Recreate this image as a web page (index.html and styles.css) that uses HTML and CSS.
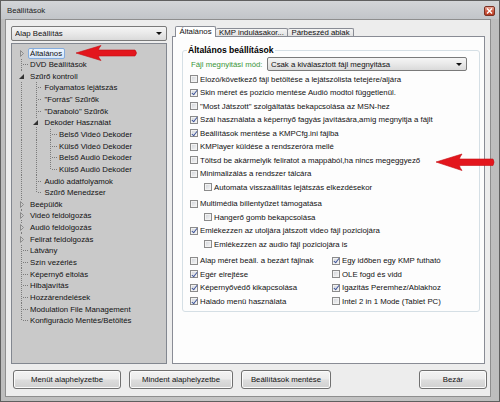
FILE: index.html
```html
<!DOCTYPE html>
<html lang="hu">
<head>
<meta charset="utf-8">
<title>Beállítások</title>
<link rel="stylesheet" href="styles.css">
</head>
<body>
<div class="window">
  <div class="titlebar">
    <span class="title">Beállítások</span>
    <span class="close"><svg width="7" height="6" viewBox="0 0 7 6"><path d="M1 0.5 L6 5.5 M6 0.5 L1 5.5" stroke="#fff" stroke-width="1.4"/></svg></span>
  </div>
  <div class="frame">
    <div class="client">
      <div class="left">
        <div class="combo"><span class="combo-text">Alap Beállítás</span><span class="caret"></span></div>
        <div class="tree">
          <div class="row"><span class="g f"><svg class="exp" width="7" height="9" viewBox="0 0 7 9"><rect width="7" height="9" fill="#c9c9c9"/><path d="M2.5 1.5 L5.5 4.5 L2.5 7.5 Z" fill="none" stroke="#8c8c8c"/></svg></span><span class="lbl sel">Általános</span></div>
          <div class="row"><span class="g t"></span><span class="lbl">DVD Beállítások</span></div>
          <div class="row"><span class="g v"><svg class="exp" width="7" height="9" viewBox="0 0 7 9"><rect width="7" height="9" fill="#c9c9c9"/><path d="M6 2 L6 7 L1 7 Z" fill="#333"/></svg></span><span class="lbl">Szűrő kontroll</span></div>
          <div class="row"><span class="g v"></span><span class="g t"></span><span class="lbl">Folyamatos lejátszás</span></div>
          <div class="row"><span class="g v"></span><span class="g t"></span><span class="lbl">"Forrás" Szűrők</span></div>
          <div class="row"><span class="g v"></span><span class="g t"></span><span class="lbl">"Daraboló" Szűrők</span></div>
          <div class="row"><span class="g v"></span><span class="g v"><svg class="exp" width="7" height="9" viewBox="0 0 7 9"><rect width="7" height="9" fill="#c9c9c9"/><path d="M6 2 L6 7 L1 7 Z" fill="#333"/></svg></span><span class="lbl">Dekoder Használat</span></div>
          <div class="row"><span class="g v"></span><span class="g v"></span><span class="g t"></span><span class="lbl">Belső Videó Dekoder</span></div>
          <div class="row"><span class="g v"></span><span class="g v"></span><span class="g t"></span><span class="lbl">Külső Videó Dekoder</span></div>
          <div class="row"><span class="g v"></span><span class="g v"></span><span class="g t"></span><span class="lbl">Belső Audió Dekoder</span></div>
          <div class="row"><span class="g v"></span><span class="g v"></span><span class="g l"></span><span class="lbl">Külső Audió Dekoder</span></div>
          <div class="row"><span class="g v"></span><span class="g t"></span><span class="lbl">Audió adatfolyamok</span></div>
          <div class="row"><span class="g v"></span><span class="g l"></span><span class="lbl">Szűrő Menedzser</span></div>
          <div class="row"><span class="g v"><svg class="exp" width="7" height="9" viewBox="0 0 7 9"><rect width="7" height="9" fill="#c9c9c9"/><path d="M2.5 1.5 L5.5 4.5 L2.5 7.5 Z" fill="none" stroke="#8c8c8c"/></svg></span><span class="lbl">Beépülők</span></div>
          <div class="row"><span class="g v"><svg class="exp" width="7" height="9" viewBox="0 0 7 9"><rect width="7" height="9" fill="#c9c9c9"/><path d="M2.5 1.5 L5.5 4.5 L2.5 7.5 Z" fill="none" stroke="#8c8c8c"/></svg></span><span class="lbl">Videó feldolgozás</span></div>
          <div class="row"><span class="g v"><svg class="exp" width="7" height="9" viewBox="0 0 7 9"><rect width="7" height="9" fill="#c9c9c9"/><path d="M2.5 1.5 L5.5 4.5 L2.5 7.5 Z" fill="none" stroke="#8c8c8c"/></svg></span><span class="lbl">Audió feldolgozás</span></div>
          <div class="row"><span class="g v"><svg class="exp" width="7" height="9" viewBox="0 0 7 9"><rect width="7" height="9" fill="#c9c9c9"/><path d="M2.5 1.5 L5.5 4.5 L2.5 7.5 Z" fill="none" stroke="#8c8c8c"/></svg></span><span class="lbl">Felirat feldolgozás</span></div>
          <div class="row"><span class="g t"></span><span class="lbl">Látvány</span></div>
          <div class="row"><span class="g t"></span><span class="lbl">Szín vezérlés</span></div>
          <div class="row"><span class="g t"></span><span class="lbl">Képernyő eltolás</span></div>
          <div class="row"><span class="g t"></span><span class="lbl">Hibajavítás</span></div>
          <div class="row"><span class="g t"></span><span class="lbl">Hozzárendelések</span></div>
          <div class="row"><span class="g t"></span><span class="lbl">Modulation File Management</span></div>
          <div class="row"><span class="g l"></span><span class="lbl">Konfiguráció Mentés/Betöltés</span></div>
        </div>
      </div>
      <div class="right">
        <div class="tabs">
          <div class="tab sel w1">Általános</div>
          <div class="tab w2">KMP indulásakor...</div>
          <div class="tab w3">Párbeszéd ablak</div>
        </div>
        <div class="panel">
          <div class="group">
            <div class="gtitle">Általános beállítások</div>
            <div class="filerow">
              <span class="flabel">Fájl megnyitási mód:</span>
              <div class="combo wide"><span class="combo-text">Csak a kiválasztott fájl megnyitása</span><span class="caret"></span></div>
            </div>
            <div class="list first">
              <div class="chk"><span class="cb"></span>Elozó/következő fájl betöltése a lejátszólista tetejére/aljára</div>
              <div class="chk"><span class="cb on"></span>Skin méret és pozicio mentése Audió modtol függetlenül.</div>
              <div class="chk"><span class="cb"></span>"Most Játszott" szolgáltatás bekapcsolása az MSN-hez</div>
              <div class="chk"><span class="cb on"></span>Szál használata a képernyő fagyás javítására,amíg megnyitja a fájlt</div>
              <div class="chk"><span class="cb on"></span>Beállítások mentése a KMPCfg.ini fájlba</div>
              <div class="chk"><span class="cb"></span>KMPlayer küldése a rendszeróra mellé</div>
              <div class="chk"><span class="cb"></span>Töltsd be akármelyik feliratot a mappából,ha nincs megeggyező</div>
              <div class="chk"><span class="cb"></span>Minimalizálás a rendszer tálcára</div>
              <div class="chk sub"><span class="cb"></span>Automata visszaállítás lejátszás elkezdésekor</div>
            </div>
            <div class="list">
              <div class="chk"><span class="cb"></span>Multimédia billentyűzet támogatása</div>
              <div class="chk sub"><span class="cb"></span>Hangerő gomb bekapcsolása</div>
              <div class="chk"><span class="cb on"></span>Emlékezzen az utoljára játszott video fájl poziciojára</div>
              <div class="chk sub"><span class="cb"></span>Emlékezzen az audio fájl poziciojára is</div>
            </div>
            <div class="list grid2">
              <div class="chk"><span class="cb"></span>Alap méret beáll. a bezárt fájlnak</div>
              <div class="chk"><span class="cb on"></span>Egy időben egy KMP futható</div>
              <div class="chk"><span class="cb on"></span>Egér elrejtése</div>
              <div class="chk"><span class="cb"></span>OLE fogd és vidd</div>
              <div class="chk"><span class="cb on"></span>Képernyővédő kikapcsolása</div>
              <div class="chk"><span class="cb on"></span>Igazitás Peremhez/Ablakhoz</div>
              <div class="chk"><span class="cb on"></span>Halado menü használata</div>
              <div class="chk"><span class="cb"></span>Intel 2 in 1 Mode (Tablet PC)</div>
            </div>
          </div>
        </div>
      </div>
      <div class="buttons">
        <div class="btn b1">Menüt alaphelyzetbe</div>
        <div class="btn b2">Mindent alaphelyzetbe</div>
        <div class="btn b3">Beállítások mentése</div>
        <div class="btn b4">Bezár</div>
      </div>
    </div>
  </div>
  <svg class="arrow a1" width="66" height="19" viewBox="0 0 66 19"><path d="M2 9 L27 1.5 Q24.5 4.5 24.5 6 L61 6 Q64 9 61 12 L24.5 12 Q24.5 13.5 27 16.5 Z" fill="#e3161d" stroke="#c40d12" stroke-width="0.6"/></svg>
  <svg class="arrow a2" width="62" height="19" viewBox="0 0 62 19"><path d="M2 9 L28 1 Q25.5 4.5 25.5 6 L59 6 Q61 9 59 12.5 L25.5 12.5 Q25.5 14 28 17.5 Z" fill="#e3161d" stroke="#c40d12" stroke-width="0.6"/></svg>
</div>
</body>
</html>
```

FILE: styles.css
```css
* { box-sizing: border-box; }
html, body { margin: 0; padding: 0; }
body {
  font-family: "Liberation Sans", Arial, sans-serif;
  font-size: 7.8px;
  color: #111;
  background: #bdbdbd;
}
.window {
  position: relative;
  width: 500px;
  height: 402px;
  border: 1px solid #5f5f5f;
  background: linear-gradient(90deg, #bdbdbd, #c6c6c6 50%, #bdbdbd);
  display: flex;
  flex-direction: column;
}
.titlebar {
  height: 18px;
  flex: none;
  display: flex;
  align-items: center;
  justify-content: space-between;
  padding: 0 4px 0 6px;
  background: linear-gradient(#d3d5d8, #c2c5c9);
}
.title { color: #1d1d1d; font-size: 7.8px; }
.close {
  width: 11px;
  height: 10px;
  margin-top: 1px;
  border: 1px solid #7a3024;
  border-radius: 2px;
  background: linear-gradient(#e8a898, #cf5b44 50%, #b6391f);
  display: flex;
  align-items: center;
  justify-content: center;
}
.frame {
  flex: 1;
  display: flex;
  padding: 0 8px 4px 4px;
}
.client {
  flex: 1;
  border: 1px solid #8e8e8e;
  background: #ededed;
  padding: 6px 5px 7px 5px;
  display: grid;
  grid-template-columns: 156px 1fr;
  grid-template-rows: 1fr 19px;
  column-gap: 5px;
  row-gap: 6px;
}
.left { display: flex; flex-direction: column; min-height: 0; }
.combo {
  height: 15px;
  flex: none;
  margin-bottom: 2px;
  border: 1px solid #7a7a7a;
  border-radius: 2px;
  background: linear-gradient(#f5f5f5, #e9e9e9 50%, #dadada);
  display: flex;
  align-items: center;
  padding: 0 4px 0 3px;
}
.combo-text { flex: 1; white-space: nowrap; overflow: hidden; }
.caret {
  width: 0; height: 0;
  border-left: 3px solid transparent;
  border-right: 3px solid transparent;
  border-top: 3px solid #111;
}
.tree {
  flex: 1;
  border: 1px solid #828790;
  background: #c9c9c9;
  padding: 3.2px 0 0 1px;
  --ln: #7b7b7b;
}
.row {
  display: flex;
  align-items: center;
  height: 11.65px;
  white-space: nowrap;
}
.g {
  width: 14.5px;
  height: 100%;
  flex: none;
  display: flex;
  align-items: center;
}
.g.v {
  background: repeating-linear-gradient(to bottom, var(--ln) 0 1px, transparent 1px 2px) 8px 0 / 1px 100% no-repeat;
}
.g.f {
  background: repeating-linear-gradient(to bottom, var(--ln) 0 1px, transparent 1px 2px) 8px 100% / 1px 50% no-repeat;
}
.g.t {
  background:
    repeating-linear-gradient(to bottom, var(--ln) 0 1px, transparent 1px 2px) 8px 0 / 1px 100% no-repeat,
    repeating-linear-gradient(to right, var(--ln) 0 1px, transparent 1px 2px) 10px 50% / 5px 1px no-repeat;
}
.g.l {
  background:
    repeating-linear-gradient(to bottom, var(--ln) 0 1px, transparent 1px 2px) 8px 0 / 1px 50% no-repeat,
    repeating-linear-gradient(to right, var(--ln) 0 1px, transparent 1px 2px) 10px 50% / 5px 1px no-repeat;
}
.exp { margin-left: 4.5px; display: block; }
.lbl {
  border: 1px solid transparent;
  padding: 0 1.5px;
  line-height: 9px;
  border-radius: 2px;
}
.lbl.sel {
  border-color: #84acdd;
  background: linear-gradient(#eef5fd, #d5e6fa);
}
.right { display: flex; flex-direction: column; min-height: 0; }
.tabs {
  height: 11px;
  flex: none;
  display: flex;
  align-items: flex-end;
  border-bottom: 1px solid #898c95;
  padding-left: 3px;
}
.tab {
  height: 8px;
  border: 1px solid #898c95;
  border-bottom: none;
  border-left: none;
  background: linear-gradient(#f4f4f4, #e2e2e2);
  line-height: 8px;
  text-align: center;
  white-space: nowrap;
  border-radius: 2px 2px 0 0;
}
.tab.sel {
  height: 11px;
  margin-bottom: -1px;
  border-left: 1px solid #898c95;
  background: #fff;
  line-height: 10px;
}
.w1 { width: 41px; }
.w2 { width: 72px; }
.w3 { width: 66px; }
.panel {
  flex: 1;
  border: 1px solid #898c95;
  border-top: none;
  background: #fdfdfd;
  padding: 13px 4px 0 9px;
}
.group {
  border: 1px solid #d5dfe5;
  border-radius: 3px;
  padding: 0 0 3.25px 7px;
}
.gtitle {
  width: fit-content;
  margin: -6px 0 0 -3px;
  padding: 0 1px;
  background: #fdfdfd;
  font-weight: bold;
  font-size: 8.6px;
  line-height: 11px;
  color: #000;
}
.filerow {
  display: flex;
  align-items: center;
  height: 14px;
  margin-top: 1px;
}
.flabel {
  width: 77px;
  padding-left: 1px;
  color: #3a963a;
  white-space: nowrap;
}
.combo.wide {
  width: 200px;
  height: 14px;
  margin-bottom: 0;
}
.list { margin-top: 3px; }
.list.first { margin-top: 1.25px; }
.grid2 {
  display: grid;
  grid-template-columns: 142px 1fr;
}
.chk {
  display: flex;
  align-items: center;
  height: 13.5px;
  white-space: nowrap;
}
.chk.sub { padding-left: 14px; }
.cb {
  width: 8px;
  height: 8px;
  flex: none;
  margin-right: 2px;
  border: 1px solid #8b8b8b;
  background: linear-gradient(135deg, #cfd2d7, #f8f8f8);
  box-shadow: inset 0 0 0 1px #f2f2f2;
  display: flex;
  align-items: center;
  justify-content: center;
}
.cb.on::after {
  content: "";
  width: 2px;
  height: 5px;
  margin-top: -1px;
  border: solid #3f559a;
  border-width: 0 1.5px 1.5px 0;
  transform: rotate(38deg);
}
.buttons {
  grid-column: 1 / -1;
  display: flex;
  gap: 8px;
  padding-left: 2px;
  margin-right: -2px;
}
.btn {
  height: 19px;
  border: 1px solid #707070;
  border-radius: 3px;
  background: linear-gradient(#f3f3f3, #ebebeb 48%, #dddddd 52%, #d0d0d0);
  box-shadow: inset 0 0 0 1px #fbfbfb;
  display: flex;
  align-items: center;
  justify-content: center;
  white-space: nowrap;
}
.b1 { width: 108px; }
.b2 { width: 104px; }
.b3 { width: 90px; }
.b4 { width: 68px; margin-left: auto; }
.arrow { position: absolute; display: block; }
.a1 { left: 73px; top: 43px; }
.a2 { left: 433px; top: 152px; }
```
